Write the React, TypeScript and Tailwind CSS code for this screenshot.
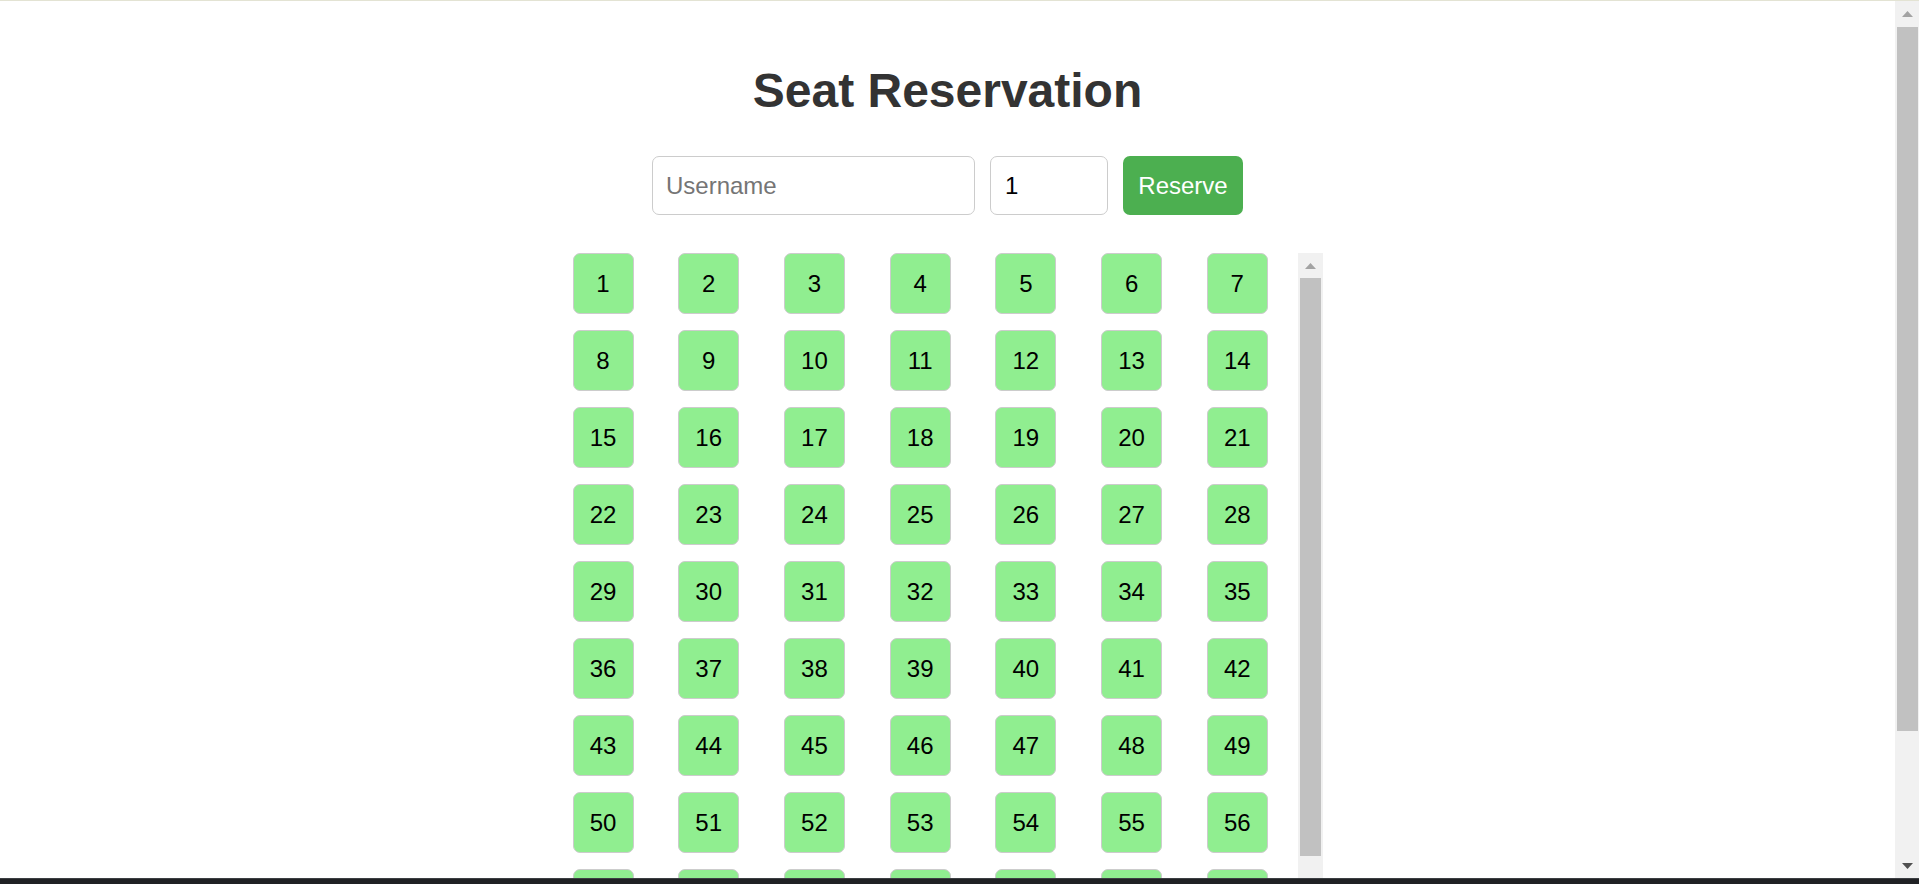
const seats = Array.from({ length: 80 }, (_, i) => i + 1)

function Arrow({ up, color }: { up: boolean; color: string }) {
  return (
    <svg width="11" height="6" viewBox="0 0 11 6">
      <polygon points={up ? '5.5,0 11,6 0,6' : '0,0 11,0 5.5,6'} fill={color} />
    </svg>
  )
}

function PanelScrollbar() {
  return (
    <div className='w-[25px] shrink-0 h-full flex flex-col bg-[#f1f1f1]'>
      <div className='h-[25px] flex items-center justify-center'>
        <Arrow up color='#a3a3a3' />
      </div>
      <div className='h-[578px] mx-[2px] bg-[#c1c1c1]' />
      <div className='flex-1' />
      <div className='h-[25px] flex items-center justify-center'>
        <Arrow up={false} color='#505050' />
      </div>
    </div>
  )
}

function PageScrollbar() {
  return (
    <div className='w-[24px] shrink-0 flex flex-col bg-[#f1f1f1]'>
      <div className='h-[25px] flex items-center justify-center'>
        <Arrow up color='#a3a3a3' />
      </div>
      <div className='h-[704px] mt-px ml-[2px] mr-px bg-[#c1c1c1]' />
      <div className='flex-1' />
      <div className='h-[25px] flex items-center justify-center'>
        <Arrow up={false} color='#505050' />
      </div>
    </div>
  )
}

export default function App() {
  return (
    <div className="h-[884px] w-full flex flex-col overflow-hidden bg-white font-['Liberation_Sans',Arial,sans-serif]">
      <div className='h-px shrink-0 bg-[#e3e3d3]' />
      <div className='flex-1 min-h-0 flex'>
        <main className='flex-1 overflow-hidden pt-[62px] flex flex-col items-center'>
          <h1 className='text-[48px] leading-[55px] font-bold text-[#333]'>Seat Reservation</h1>
          <form className='mt-[38px] flex gap-[15px] h-[59px] shrink-0'>
            <input
              type='text'
              placeholder='Username'
              className='w-[323px] h-full pl-[13px] text-[24px] text-black border border-[#ccc] rounded-[7px] placeholder:text-[#757575] outline-none'
            />
            <input
              type='text'
              defaultValue='1'
              className='w-[118px] h-full pl-[14px] text-[24px] text-black border border-[#ccc] rounded-[7px] outline-none'
            />
            <button type='button' className='w-[120px] h-full text-[24px] text-white bg-[#4caf50] rounded-[7px]'>
              Reserve
            </button>
          </form>
          <div className='mt-[38px] w-[750px] h-[750px] shrink-0 flex'>
            <div className='w-[725px] h-full overflow-hidden grid grid-cols-[repeat(7,minmax(0,1fr))] gap-x-[15px] gap-y-[16px] content-start'>
              {seats.map((n) => (
                <div
                  key={n}
                  className='w-[61px] h-[61px] flex items-center justify-center bg-[#90ee90] border border-[#ccc] rounded-[7px] text-[24px] text-black'
                >
                  {n}
                </div>
              ))}
            </div>
            <PanelScrollbar />
          </div>
        </main>
        <PageScrollbar />
      </div>
      <div className='h-[6px] shrink-0 bg-[#202124] border-t border-[#3c3f43]' />
    </div>
  )
}
